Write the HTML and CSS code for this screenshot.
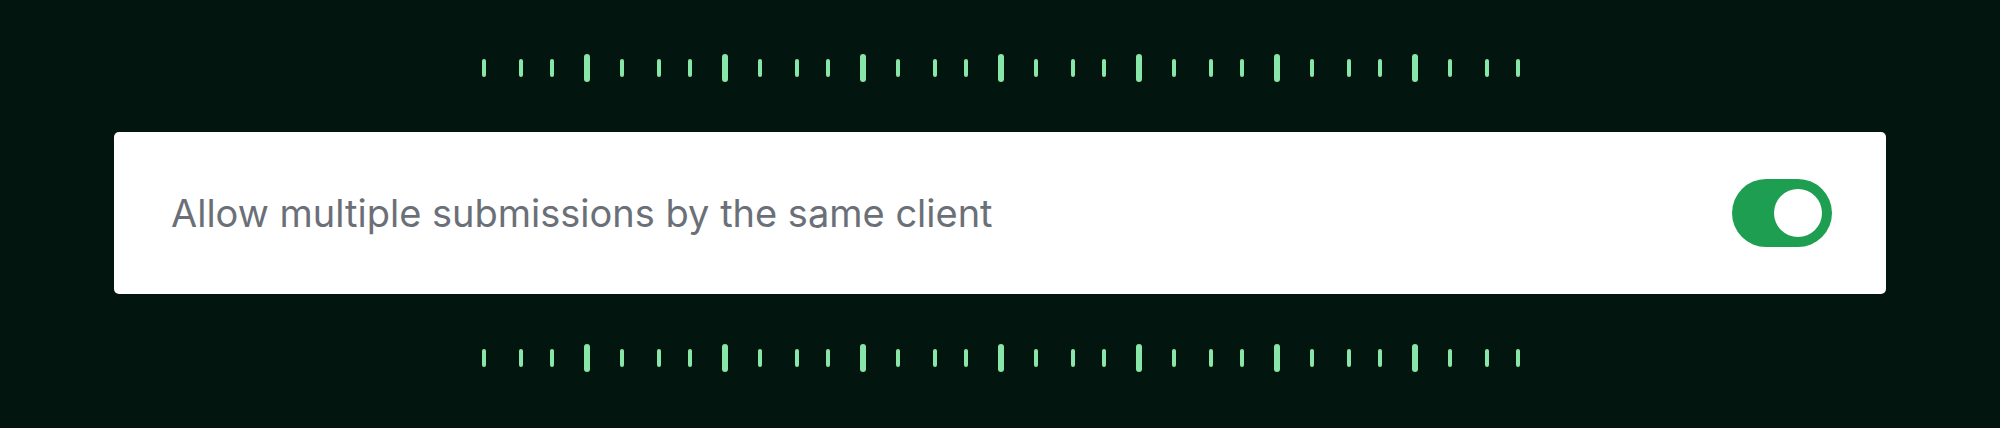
FILE: index.html
```html
<!DOCTYPE html>
<html lang="en">
<head>
<meta charset="utf-8">
<title>Allow multiple submissions</title>
<link rel="stylesheet" href="styles.css">
</head>
<body>
<main class="stage">
  <div class="ruler">
    <span class="tick"></span><span class="tick"></span><span class="tick"></span><span class="tick tick--major"></span>
    <span class="tick"></span><span class="tick"></span><span class="tick"></span><span class="tick tick--major"></span>
    <span class="tick"></span><span class="tick"></span><span class="tick"></span><span class="tick tick--major"></span>
    <span class="tick"></span><span class="tick"></span><span class="tick"></span><span class="tick tick--major"></span>
    <span class="tick"></span><span class="tick"></span><span class="tick"></span><span class="tick tick--major"></span>
    <span class="tick"></span><span class="tick"></span><span class="tick"></span><span class="tick tick--major"></span>
    <span class="tick"></span><span class="tick"></span><span class="tick"></span><span class="tick tick--major"></span>
    <span class="tick"></span><span class="tick"></span><span class="tick"></span>
  </div>

  <section class="setting-card">
    <span class="setting-label">Allow multiple submissions by the same client</span>
    <span class="switch" role="switch" aria-checked="true"><span class="switch-knob"></span></span>
  </section>

  <div class="ruler">
    <span class="tick"></span><span class="tick"></span><span class="tick"></span><span class="tick tick--major"></span>
    <span class="tick"></span><span class="tick"></span><span class="tick"></span><span class="tick tick--major"></span>
    <span class="tick"></span><span class="tick"></span><span class="tick"></span><span class="tick tick--major"></span>
    <span class="tick"></span><span class="tick"></span><span class="tick"></span><span class="tick tick--major"></span>
    <span class="tick"></span><span class="tick"></span><span class="tick"></span><span class="tick tick--major"></span>
    <span class="tick"></span><span class="tick"></span><span class="tick"></span><span class="tick tick--major"></span>
    <span class="tick"></span><span class="tick"></span><span class="tick"></span><span class="tick tick--major"></span>
    <span class="tick"></span><span class="tick"></span><span class="tick"></span>
  </div>
</main>
</body>
</html>
```

FILE: styles.css
```css
* {
  box-sizing: border-box;
}

html,
body {
  margin: 0;
  padding: 0;
  background: #02150f;
}

body {
  font-family: Inter, "Noto Sans", "Liberation Sans", sans-serif;
  width: 2000px;
  height: 428px;
  overflow: hidden;
}

.stage {
  display: flex;
  flex-direction: column;
  align-items: center;
  gap: 50px;
  padding-top: 54px;
  height: 428px;
}

.ruler {
  display: flex;
  align-items: center;
  height: 28px;
  padding-left: 2px;
}

.tick {
  display: block;
  flex: none;
  width: 4px;
  height: 18px;
  border-radius: 2px;
  background: #88e6a8;
}

.tick--major {
  width: 6px;
  height: 28px;
  border-radius: 3px;
}

.tick:nth-child(4n + 2) {
  margin-left: 33px;
}

.tick:nth-child(4n + 3) {
  margin-left: 27px;
}

.tick:nth-child(4n) {
  margin-left: 30px;
}

.tick:nth-child(4n + 1) {
  margin-left: 30px;
}

.tick:first-child {
  margin-left: 0;
}

.setting-card {
  width: 1772px;
  height: 162px;
  background: #ffffff;
  border-radius: 5px;
  display: flex;
  align-items: center;
  justify-content: space-between;
  padding: 0 54px 0 57px;
}

.setting-label {
  font-size: 38px;
  font-weight: 400;
  color: #6b7078;
  letter-spacing: 0;
}

.switch {
  display: flex;
  justify-content: flex-end;
  align-items: center;
  width: 100px;
  height: 68px;
  padding: 10px;
  border-radius: 34px;
  background: #1e9e50;
}

.switch-knob {
  width: 48px;
  height: 48px;
  border-radius: 50%;
  background: #ffffff;
}
```
